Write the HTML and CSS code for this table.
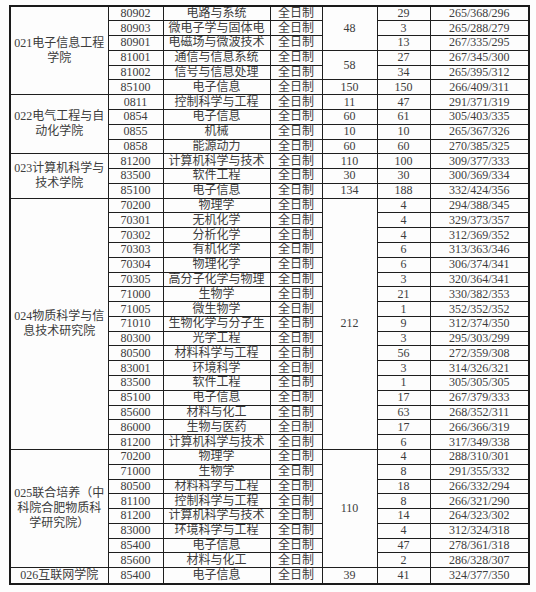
FILE: index.html
```html
<!DOCTYPE html>
<html lang="zh-CN">
<head>
<meta charset="utf-8">
<title>招生统计表</title>
<link rel="stylesheet" href="styles.css">
</head>
<body>
<table class="tbl">
<colgroup>
<col class="c1"><col class="c2"><col class="c3"><col class="c4"><col class="c5"><col class="c6"><col class="c7">
</colgroup>
<tbody>
<tr><td class="dept" rowspan="6">021电子信息工程<br>学院</td><td>80902</td><td>电路与系统</td><td>全日制</td><td rowspan="3">48</td><td>29</td><td>265/368/296</td></tr>
<tr><td>80903</td><td>微电子学与固体电</td><td>全日制</td><td>3</td><td>265/288/279</td></tr>
<tr><td>80901</td><td>电磁场与微波技术</td><td>全日制</td><td>13</td><td>267/335/295</td></tr>
<tr><td>81001</td><td>通信与信息系统</td><td>全日制</td><td rowspan="2">58</td><td>27</td><td>267/345/300</td></tr>
<tr><td>81002</td><td>信号与信息处理</td><td>全日制</td><td>34</td><td>265/395/312</td></tr>
<tr><td>85100</td><td>电子信息</td><td>全日制</td><td>150</td><td>150</td><td>266/409/311</td></tr>

<tr><td class="dept" rowspan="4">022电气工程与自<br>动化学院</td><td>0811</td><td>控制科学与工程</td><td>全日制</td><td>11</td><td>47</td><td>291/371/319</td></tr>
<tr><td>0854</td><td>电子信息</td><td>全日制</td><td>60</td><td>61</td><td>305/403/335</td></tr>
<tr><td>0855</td><td>机械</td><td>全日制</td><td>10</td><td>10</td><td>265/367/326</td></tr>
<tr><td>0858</td><td>能源动力</td><td>全日制</td><td>60</td><td>60</td><td>270/385/325</td></tr>

<tr><td class="dept" rowspan="3">023计算机科学与<br>技术学院</td><td>81200</td><td>计算机科学与技术</td><td>全日制</td><td>110</td><td>100</td><td>309/377/333</td></tr>
<tr><td>83500</td><td>软件工程</td><td>全日制</td><td>30</td><td>30</td><td>300/369/334</td></tr>
<tr><td>85100</td><td>电子信息</td><td>全日制</td><td>134</td><td>188</td><td>332/424/356</td></tr>

<tr><td class="dept" rowspan="17">024物质科学与信<br>息技术研究院</td><td>70200</td><td>物理学</td><td>全日制</td><td rowspan="17">212</td><td>4</td><td>294/388/345</td></tr>
<tr><td>70301</td><td>无机化学</td><td>全日制</td><td>4</td><td>329/373/357</td></tr>
<tr><td>70302</td><td>分析化学</td><td>全日制</td><td>4</td><td>312/369/352</td></tr>
<tr><td>70303</td><td>有机化学</td><td>全日制</td><td>6</td><td>313/363/346</td></tr>
<tr><td>70304</td><td>物理化学</td><td>全日制</td><td>6</td><td>306/374/341</td></tr>
<tr><td>70305</td><td>高分子化学与物理</td><td>全日制</td><td>3</td><td>320/364/341</td></tr>
<tr><td>71000</td><td>生物学</td><td>全日制</td><td>21</td><td>330/382/353</td></tr>
<tr><td>71005</td><td>微生物学</td><td>全日制</td><td>1</td><td>352/352/352</td></tr>
<tr><td>71010</td><td>生物化学与分子生</td><td>全日制</td><td>9</td><td>312/374/350</td></tr>
<tr><td>80300</td><td>光学工程</td><td>全日制</td><td>3</td><td>295/303/299</td></tr>
<tr><td>80500</td><td>材料科学与工程</td><td>全日制</td><td>56</td><td>272/359/308</td></tr>
<tr><td>83001</td><td>环境科学</td><td>全日制</td><td>3</td><td>314/326/321</td></tr>
<tr><td>83500</td><td>软件工程</td><td>全日制</td><td>1</td><td>305/305/305</td></tr>
<tr><td>85100</td><td>电子信息</td><td>全日制</td><td>17</td><td>267/379/333</td></tr>
<tr><td>85600</td><td>材料与化工</td><td>全日制</td><td>63</td><td>268/352/311</td></tr>
<tr><td>86000</td><td>生物与医药</td><td>全日制</td><td>17</td><td>266/366/319</td></tr>
<tr><td>81200</td><td>计算机科学与技术</td><td>全日制</td><td>6</td><td>317/349/338</td></tr>

<tr><td class="dept" rowspan="8">025联合培养（中<br>科院合肥物质科<br>学研究院）</td><td>70200</td><td>物理学</td><td>全日制</td><td rowspan="8">110</td><td>4</td><td>288/310/301</td></tr>
<tr><td>71000</td><td>生物学</td><td>全日制</td><td>8</td><td>291/355/332</td></tr>
<tr><td>80500</td><td>材料科学与工程</td><td>全日制</td><td>18</td><td>266/332/294</td></tr>
<tr><td>81100</td><td>控制科学与工程</td><td>全日制</td><td>8</td><td>266/321/290</td></tr>
<tr><td>81200</td><td>计算机科学与技术</td><td>全日制</td><td>14</td><td>264/323/302</td></tr>
<tr><td>83000</td><td>环境科学与工程</td><td>全日制</td><td>4</td><td>312/324/318</td></tr>
<tr><td>85400</td><td>电子信息</td><td>全日制</td><td>47</td><td>278/361/318</td></tr>
<tr><td>85600</td><td>材料与化工</td><td>全日制</td><td>2</td><td>286/328/307</td></tr>

<tr><td class="dept">026互联网学院</td><td>85400</td><td>电子信息</td><td>全日制</td><td>39</td><td>41</td><td>324/377/350</td></tr>
</tbody>
</table>
</body>
</html>
```
FILE: styles.css
```css
html, body {
  margin: 0;
  padding: 0;
  background: #fdfdfd;
}

body {
  padding: 5px 0 0 9px;
}

.tbl {
  border-collapse: collapse;
  table-layout: fixed;
  width: 519px;
  border: 2px solid #1a1a1a;
  font-family: "Liberation Serif", "Noto Sans CJK SC", serif;
  font-size: 12px;
  color: #3c3c3c;
}

.c1 { width: 98px; }
.c2 { width: 55px; }
.c3 { width: 107px; }
.c4 { width: 52px; }
.c5 { width: 55px; }
.c6 { width: 53px; }
.c7 { width: 99px; }

.tbl tr {
  height: 14.79px;
}

.tbl td {
  border: 1px solid #1e1e1e;
  padding: 0;
  line-height: 13px;
  text-align: center;
  vertical-align: middle;
  white-space: nowrap;
  overflow: hidden;
}

.tbl td.dept {
  white-space: normal;
  line-height: 15px;
  font-size: 12px;
}
```
